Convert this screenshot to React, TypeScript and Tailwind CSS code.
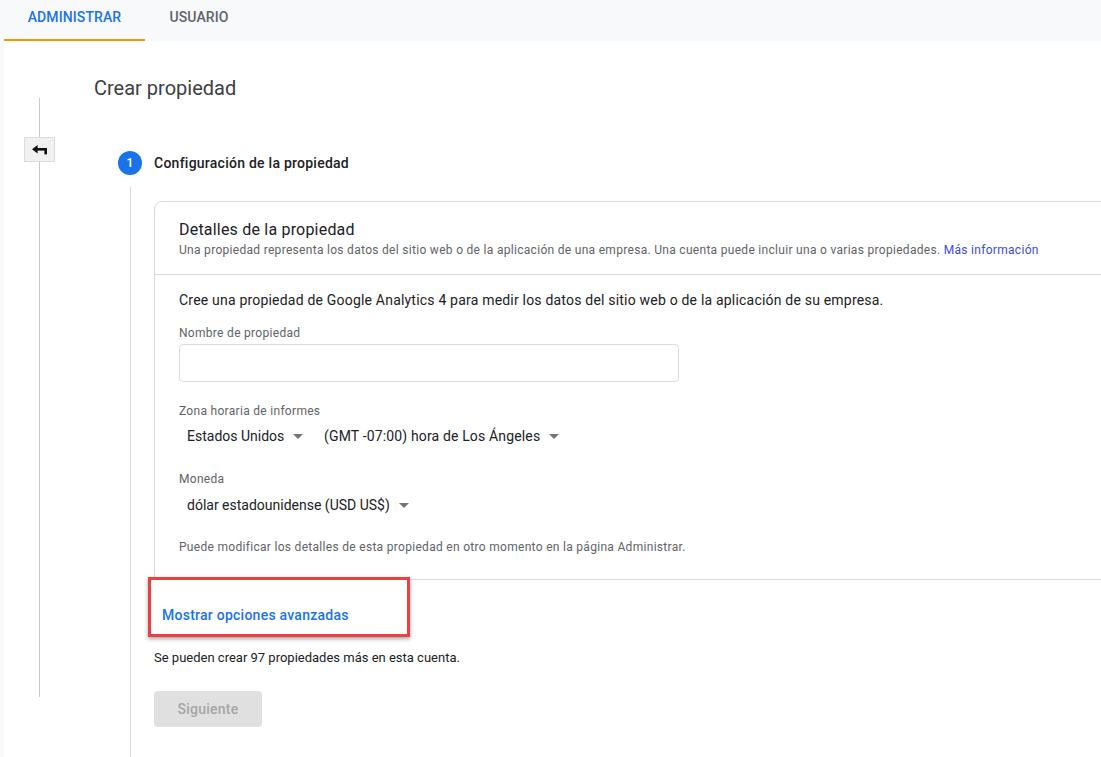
import React from "react";

function Caret() {
  return (
    <svg width="10" height="5" viewBox="0 0 10 5" className="ml-[9px] mt-[1px]">
      <polygon points="0,0 10,0 5,5" fill="#757575" />
    </svg>
  );
}

function BackIcon() {
  return (
    <svg width="15" height="10" viewBox="0 0 15 10">
      <polygon points="0,4.3 5.6,0 5.6,8.6" fill="#111" />
      <rect x="5" y="3" width="10" height="2.6" fill="#111" />
      <rect x="12.4" y="3" width="2.6" height="6.4" fill="#111" />
    </svg>
  );
}

export default function App() {
  return (
    <div
      className="w-[1101px] h-[757px] overflow-hidden bg-[#f8f9fa] pl-[4px] flex flex-col text-[#202124]"
      style={{ fontFamily: "Roboto, 'Liberation Sans', Arial, sans-serif" }}
    >
      {/* top tabs */}
      <div className="h-[41px] shrink-0 flex items-stretch">
        <div className="w-[141px] flex items-center justify-center border-b-2 border-[#f29900] pb-[5px] text-[14px] font-medium text-[#1a73e8] tracking-[0.1px]">
          ADMINISTRAR
        </div>
        <div className="w-[108px] flex items-center justify-center pb-[7px] text-[14px] font-medium text-[#5f6368] tracking-[0.1px]">
          USUARIO
        </div>
      </div>

      {/* main white area */}
      <div className="flex-1 bg-white flex min-h-0">
        {/* left rail */}
        <div className="w-[70px] shrink-0 flex flex-col items-center pt-[57px]">
          <div className="w-px h-[39px] bg-[#c8c8c8]" />
          <div className="w-[31px] h-[25px] bg-[#f1f1f1] border border-[#dcdcdc] flex items-center justify-center">
            <BackIcon />
          </div>
          <div className="w-px h-[535px] bg-[#c8c8c8]" />
        </div>

        {/* content */}
        <div className="flex-1 pl-[20px] flex flex-col min-w-0">
          <div className="h-[28px] mt-[33px] text-[20px] leading-[28px] text-[#3c4043]">Crear propiedad</div>

          {/* step header */}
          <div className="flex items-center mt-[49px] pl-[24px]">
            <div className="w-[24px] h-[24px] rounded-full bg-[#1a73e8] text-white text-[12px] font-medium flex items-center justify-center">
              1
            </div>
            <div className="ml-[12px] text-[14px] font-medium tracking-[0.25px] text-[#202124]">Configuración de la propiedad</div>
          </div>

          {/* step body */}
          <div className="flex flex-1 pl-[24px]">
            <div className="w-[24px] shrink-0 flex justify-center pt-[12px]">
              <div className="w-px h-full bg-[#dadada]" />
            </div>
            <div className="ml-[12px] flex flex-col pt-[26px]">
              {/* card */}
              <div className="w-[980px] border border-[#dadada] rounded-tl-[8px] rounded-bl-[2px] bg-white">
                <div className="px-[24px] pt-[18px] pb-[16px] border-b border-[#dadada]">
                  <div className="text-[16px] leading-[20px] tracking-[0.2px] text-[#202124]">Detalles de la propiedad</div>
                  <div className="text-[12px] leading-[16px] mt-[2px] tracking-[0.3px] text-[#5f6368]">
                    Una propiedad representa los datos del sitio web o de la aplicación de una empresa. Una cuenta puede incluir una o varias propiedades.{" "}
                    <span className="text-[#3c4bd6]">Más información</span>
                  </div>
                </div>
                <div className="px-[24px] pt-[15px] pb-[24px]">
                  <div className="text-[14px] leading-[20px] tracking-[0.2px] text-[#202124]">
                    Cree una propiedad de Google Analytics 4 para medir los datos del sitio web o de la aplicación de su empresa.
                  </div>
                  <div className="text-[12px] leading-[16px] mt-[15px] tracking-[0.3px] text-[#5f6368]">Nombre de propiedad</div>
                  <div className="w-[500px] h-[38px] mt-[3px] border border-[#dadce0] rounded-[4px]" />
                  <div className="text-[12px] leading-[16px] mt-[21px] tracking-[0.3px] text-[#5f6368]">Zona horaria de informes</div>
                  <div className="flex items-center mt-[7px] h-[20px] text-[14px] text-[#202124]">
                    <div className="flex items-center pl-[8px] w-[145px]">
                      Estados Unidos
                      <Caret />
                    </div>
                    <div className="flex items-center tracking-[0.15px]">
                      (GMT -07:00) hora de Los Ángeles
                      <Caret />
                    </div>
                  </div>
                  <div className="text-[12px] leading-[16px] mt-[25px] tracking-[0.3px] text-[#5f6368]">Moneda</div>
                  <div className="flex items-center mt-[8px] h-[20px] pl-[8px] text-[14px] text-[#202124]">
                    dólar estadounidense (USD US$)
                    <Caret />
                  </div>
                  <div className="text-[12px] leading-[16px] mt-[24px] tracking-[0.3px] text-[#5f6368]">
                    Puede modificar los detalles de esta propiedad en otro momento en la página Administrar.
                  </div>
                </div>
              </div>

              {/* advanced options link with annotation */}
              <div className="relative mt-[25px] h-[20px] flex items-center">
                <span className="pl-[8px] text-[14px] font-medium tracking-[0.25px] text-[#1a73e8]">Mostrar opciones avanzadas</span>
                <div className="absolute left-[-6px] top-[-28px] w-[262px] h-[60px] border-[3px] border-[#ec4040] shadow-[0_2px_4px_rgba(0,0,0,0.35)]" />
              </div>

              <div className="mt-[25px] text-[13px] leading-[16px] text-[#202124]">
                Se pueden crear 97 propiedades más en esta cuenta.
              </div>

              <div className="mt-[25px] w-[108px] h-[36px] rounded-[4px] bg-[#e0e0e0] flex items-center justify-center text-[14px] font-medium tracking-[0.25px] text-[#a6a6a6]">
                Siguiente
              </div>
            </div>
          </div>
        </div>
      </div>
    </div>
  );
}
